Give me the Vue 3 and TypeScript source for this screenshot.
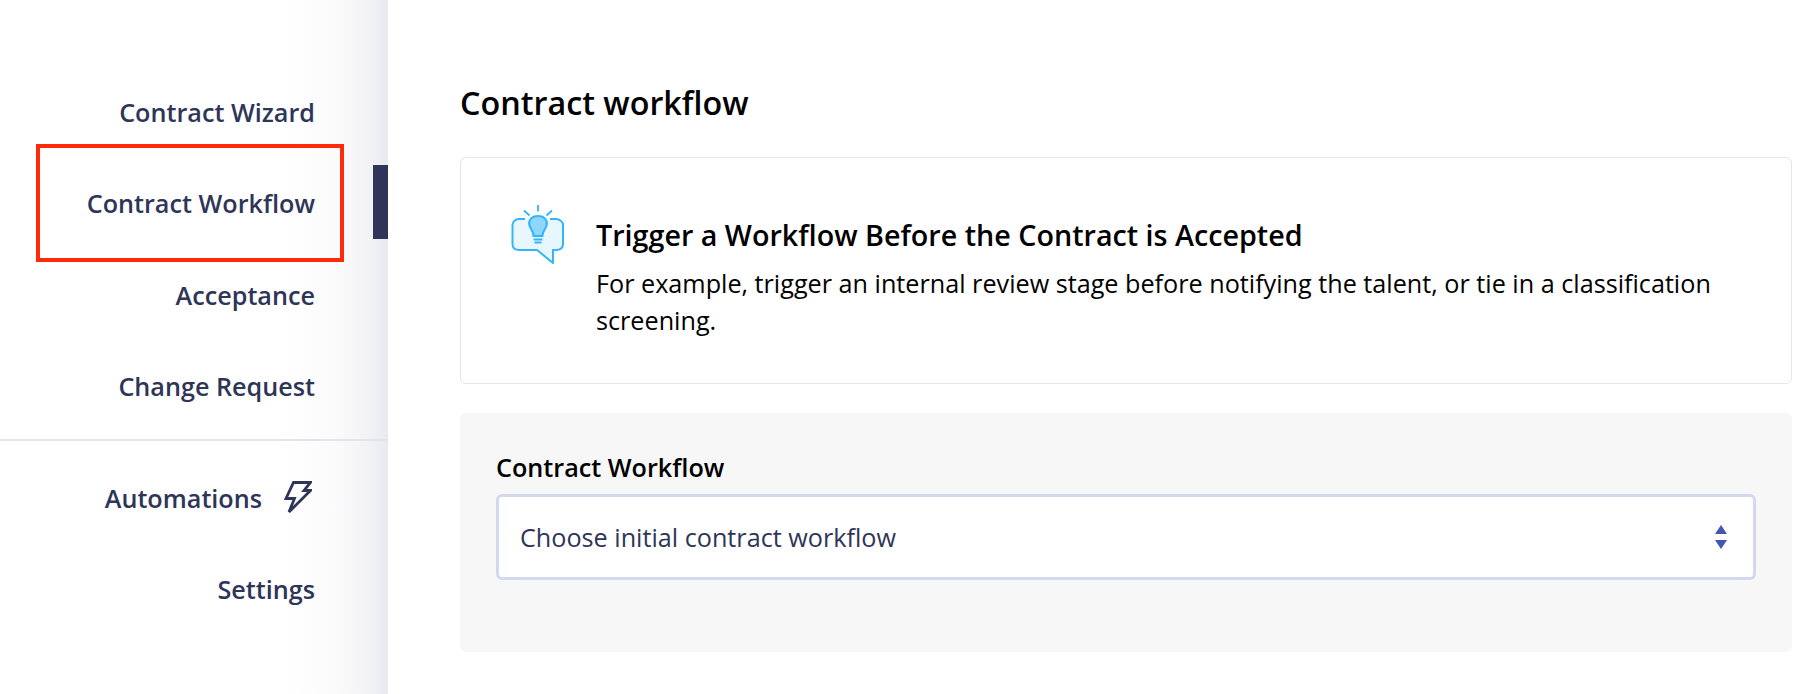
<template>
  <div class="page">
    <aside class="sidebar">
      <nav class="nav">
        <a v-for="item in topItems" :key="item" class="nav-item" :class="{ active: item === activeItem }">
          <span>{{ item }}</span>
        </a>
      </nav>
      <div class="divider"></div>
      <nav class="nav">
        <a class="nav-item">
          <span>Automations</span>
          <svg class="bolt" width="28" height="33" viewBox="0 0 28 33" fill="none">
            <path d="M9.5 1.5H26.5L20 9.5H26.5L5 31L10.5 17.5H2L9.5 1.5Z" stroke="#2e3558" stroke-width="2.8" stroke-linejoin="miter" />
          </svg>
        </a>
        <a class="nav-item"><span>Settings</span></a>
      </nav>
      <div class="highlight"></div>
    </aside>

    <main class="content">
      <h1 class="heading">Contract workflow</h1>

      <section class="tip">
        <svg class="tip-icon" width="54" height="60" viewBox="0 0 54 60" fill="none">
          <path d="M8 14H45C49 14 52 17 52 20V39C52 43 49 45 45 45H42V58L26 45H8C4 45 1.5 43 1.5 39V20C1.5 17 4 14 8 14Z" fill="#e8f6fe" stroke="#33b5f8" stroke-width="2" stroke-linejoin="round" />
          <path d="M14 14H39" stroke="#fff" stroke-width="3" />
          <path d="M27 11C34 11 37 16 35.5 20.5C34.5 24.5 31.5 26 31.5 31H22.5C22.5 26 19.5 24.5 18.5 20.5C17 16 20 11 27 11Z" fill="#8ed6fb" stroke="#33b5f8" stroke-width="2" />
          <path d="M22.5 34.5H31.5M23.5 37.5H30.5" stroke="#33b5f8" stroke-width="1.8" />
          <path d="M27 0V6.5M13 5.5L18.5 10.5M41 5.5L35.5 10.5" stroke="#33b5f8" stroke-width="1.8" />
        </svg>
        <div class="tip-body">
          <h2 class="tip-title">Trigger a Workflow Before the Contract is Accepted</h2>
          <p class="tip-text">For example, trigger an internal review stage before notifying the talent, or tie in a classification screening.</p>
        </div>
      </section>

      <section class="panel">
        <label class="field-label">Contract Workflow</label>
        <div class="select">
          <span>Choose initial contract workflow</span>
          <svg class="arrows" width="12" height="24" viewBox="0 0 12 24">
            <path d="M6 0L12 9H0Z" fill="#4357b2" />
            <path d="M0 15H12L6 24Z" fill="#4357b2" />
          </svg>
        </div>
      </section>
    </main>
  </div>
</template>

<script setup lang="ts">
const topItems: string[] = ['Contract Wizard', 'Contract Workflow', 'Acceptance', 'Change Request']
const activeItem = 'Contract Workflow'
</script>

<style scoped>
.page {
  display: flex;
  width: 1794px;
  height: 694px;
  overflow: hidden;
  background: #fff;
  font-family: "Open Sans", "Liberation Sans", sans-serif;
}

.sidebar {
  position: relative;
  flex: none;
  width: 388px;
  box-sizing: border-box;
  padding-top: 66px;
  background: linear-gradient(to right, #fff 0, #fff 280px, #fbfbfc 335px, #f3f3f6 368px, #e9eaee 388px);
}

.nav-item {
  position: relative;
  display: flex;
  align-items: center;
  justify-content: flex-end;
  gap: 22px;
  height: 91.5px;
  padding-right: 73px;
  font-size: 25.2px;
  font-weight: 600;
  color: #2e3558;
}

.nav-item.active::after {
  content: "";
  position: absolute;
  right: 0;
  top: 7.5px;
  width: 15px;
  height: 74px;
  background: #2e3558;
}

.bolt {
  margin-right: 3px;
}

.divider {
  height: 2px;
  margin: 7px 0 11px;
  background: #e3e4e9;
}

.highlight {
  position: absolute;
  left: 36px;
  top: 144px;
  width: 308px;
  height: 118px;
  box-sizing: border-box;
  border: 4px solid #ff2a0a;
}

.content {
  flex: none;
  width: 1332px;
  margin-left: 72px;
}

.heading {
  margin: 82px 0 0;
  font-size: 32.3px;
  line-height: 40px;
  font-weight: 600;
  color: #000;
}

.tip {
  display: flex;
  box-sizing: border-box;
  height: 227px;
  margin-top: 35px;
  padding: 47px 50px 0;
  border: 1px solid #e4e5ea;
  border-radius: 6px;
}

.tip-icon {
  flex: none;
  margin-right: 31px;
}

.tip-title {
  margin: 12px 0 0;
  font-size: 28.7px;
  line-height: 36px;
  font-weight: 600;
  color: #000;
}

.tip-text {
  margin: 12px 0 0;
  font-size: 25.2px;
  line-height: 37px;
  color: #000;
}

.panel {
  box-sizing: border-box;
  height: 239px;
  margin-top: 29px;
  padding: 38px 36px 0;
  border-radius: 6px;
  background: #f7f7f7;
}

.field-label {
  display: block;
  font-size: 25.2px;
  line-height: 32px;
  font-weight: 600;
  color: #000;
}

.select {
  display: flex;
  align-items: center;
  justify-content: space-between;
  box-sizing: border-box;
  height: 86px;
  margin-top: 11px;
  padding: 0 26px 0 21px;
  border: 3px solid #d3d8ef;
  border-radius: 6px;
  background: #fff;
  font-size: 25.2px;
  color: #2e3558;
}
</style>

<style>
html,
body {
  margin: 0;
  background: #fff;
}
</style>
